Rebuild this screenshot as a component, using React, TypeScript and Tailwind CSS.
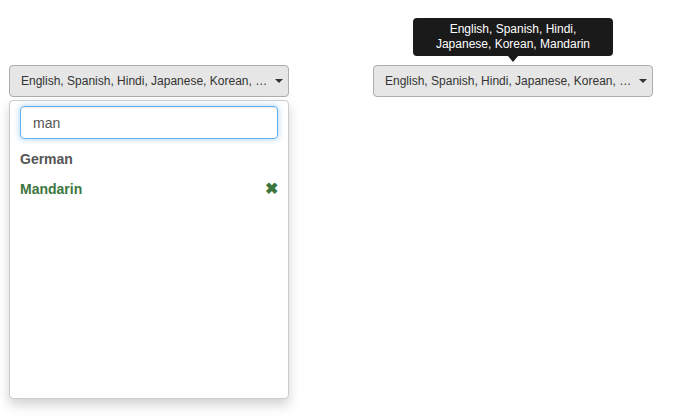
import { useState } from "react"

const languages = "English, Spanish, Hindi, Japanese, Korean, Mandarin"

function SelectButton() {
  return (
    <button className="flex h-[32px] w-[280px] items-center rounded-[4px] border border-[#adadad] bg-[#e6e6e6] pl-[11px] pr-[5px] text-left text-[12px] text-[#333]">
      <span className="flex-1 whitespace-nowrap" title={languages}>
        English, Spanish, Hindi, Japanese, Korean, …
      </span>
      <span className="h-0 w-0 border-x-[4px] border-t-[4px] border-x-transparent border-t-[#333]" />
    </button>
  )
}

export default function App() {
  const [query, setQuery] = useState("man")

  return (
    <div className="flex h-[416px] w-[674px] items-start bg-white pt-[65px] pl-[9px] font-['Liberation_Sans',Arial,sans-serif]">
      {/* Open select */}
      <div className="flex w-[280px] flex-col">
        <SelectButton />
        <div className="mt-[3px] h-[299px] rounded-[4px] border border-[#ccc] bg-white px-[10px] pt-[5px] shadow-[0_6px_12px_rgba(0,0,0,0.175)]">
          <input
            value={query}
            onChange={(e) => setQuery(e.target.value)}
            className="h-[33px] w-full rounded-[4px] border border-[#66afe9] px-[12px] text-[14px] text-[#555] shadow-[inset_0_1px_1px_rgba(0,0,0,0.075),0_0_6px_rgba(102,175,233,0.6)] outline-none"
          />
          <ul className="mt-[5px] text-[14px] font-bold">
            <li className="flex h-[30px] items-center text-[#555]">German</li>
            <li className="flex h-[30px] items-center justify-between text-[#3c763d]">
              <span>Mandarin</span>
              <span className="text-[16px] leading-none">✖</span>
            </li>
          </ul>
        </div>
      </div>

      {/* Closed select with tooltip */}
      <div className="relative ml-[84px]">
        <div className="absolute bottom-[41px] left-[40px] w-[200px] rounded-[4px] bg-[#1a1a1a] px-[8px] py-[4px] text-center text-[12px] leading-[15px] text-white">
          English, Spanish, Hindi,
          <br />
          Japanese, Korean, Mandarin
          <span className="absolute top-full left-1/2 -ml-[5px] h-0 w-0 border-x-[5px] border-t-[6px] border-x-transparent border-t-[#1a1a1a]" />
        </div>
        <SelectButton />
      </div>
    </div>
  )
}
